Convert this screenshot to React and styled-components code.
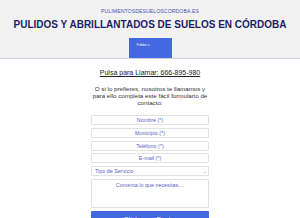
import React from "react";
import styled, { createGlobalStyle } from "styled-components";

const Global = createGlobalStyle`
  html, body { margin: 0; padding: 0; background: #fff; }
  body { font-family: "Liberation Sans", Arial, sans-serif; width: 300px; height: 218px; overflow: hidden; }
  * { box-sizing: border-box; }
`;

const Header = styled.header`
  background: #f2f2f2;
  border-bottom: 1px solid #cfcfe0;
  padding-top: 8px;
  display: flex;
  flex-direction: column;
  align-items: center;
`;

const Domain = styled.div`
  font-size: 5.2px;
  line-height: 6px;
  color: #4a57b0;
  letter-spacing: 0.05px;
`;

const Title = styled.h1`
  margin: 5px 0 0;
  font-size: 10px;
  line-height: 12px;
  font-weight: 700;
  color: #1e1e66;
  white-space: nowrap;
`;

const Nav = styled.nav`
  margin-top: 7px;
  width: 43px;
  height: 20px;
  background: #4468e0;
  padding: 5px 0 0 8px;
  font-size: 3.2px;
  color: #fff;
  line-height: 4px;
`;

const Main = styled.main`
  display: flex;
  flex-direction: column;
  align-items: center;
`;

const Call = styled.a`
  margin-top: 9px;
  font-size: 7px;
  line-height: 10px;
  color: #222;
  text-decoration: underline;
`;

const Intro = styled.p`
  margin: 6.5px 0 0;
  width: 124px;
  text-align: center;
  font-size: 6.2px;
  line-height: 7px;
  color: #333;
`;

const Form = styled.form`
  margin-top: 9.5px;
  width: 118px;
  display: flex;
  flex-direction: column;
  gap: 2.8px;
`;

const field = `
  width: 100%;
  border: 1px solid #e2e2e2;
  border-radius: 1px;
  background: #fff;
  font-family: "Liberation Sans", Arial, sans-serif;
  font-size: 5.4px;
  color: #5b66c8;
  outline: none;
  &::placeholder { color: #5b66c8; opacity: 1; }
`;

const Input = styled.input`
  ${field}
  height: 10px;
  padding: 0;
  text-align: center;
`;

const SelectBox = styled.div`
  ${field}
  height: 10px;
  display: flex;
  align-items: center;
  justify-content: space-between;
  padding: 0 2px 0 3px;
`;

const Chevron = styled.span`
  font-size: 4px;
  color: #777;
`;

const TextArea = styled.textarea`
  ${field}
  height: 29.5px;
  resize: none;
  text-align: center;
  padding: 2px 0 0;
  line-height: 6px;
`;

const Submit = styled.button`
  width: 100%;
  height: 14px;
  border: 0;
  border-radius: 1px;
  background: #4468e0;
  color: #fff;
  font-family: "Liberation Sans", Arial, sans-serif;
  font-size: 7px;
  padding: 3px 0 0;
  line-height: 8px;
`;

export default function App() {
  return (
    <>
      <Global />
      <Header>
        <Domain>PULIMENTOSDESUELOSCORDOBA.ES</Domain>
        <Title>PULIDOS Y ABRILLANTADOS DE SUELOS EN CÓRDOBA</Title>
        <Nav>Pulidos ▾</Nav>
      </Header>
      <Main>
        <Call href="#">Pulsa para Llamar: 666-895-980</Call>
        <Intro>
          O si lo prefieres, nosotros te llamamos y para ello completa este fácil formulario de contacto:
        </Intro>
        <Form onSubmit={(e) => e.preventDefault()}>
          <Input placeholder="Nombre (*)" />
          <Input placeholder="Municipio (*)" />
          <Input placeholder="Teléfono (*)" />
          <Input placeholder="E-mail (*)" />
          <SelectBox>
            <span>Tipo de Servicio</span>
            <Chevron>⌄</Chevron>
          </SelectBox>
          <TextArea placeholder="Comenta lo que necesitas...." />
          <Submit type="submit">Click para Enviar</Submit>
        </Form>
      </Main>
    </>
  );
}
